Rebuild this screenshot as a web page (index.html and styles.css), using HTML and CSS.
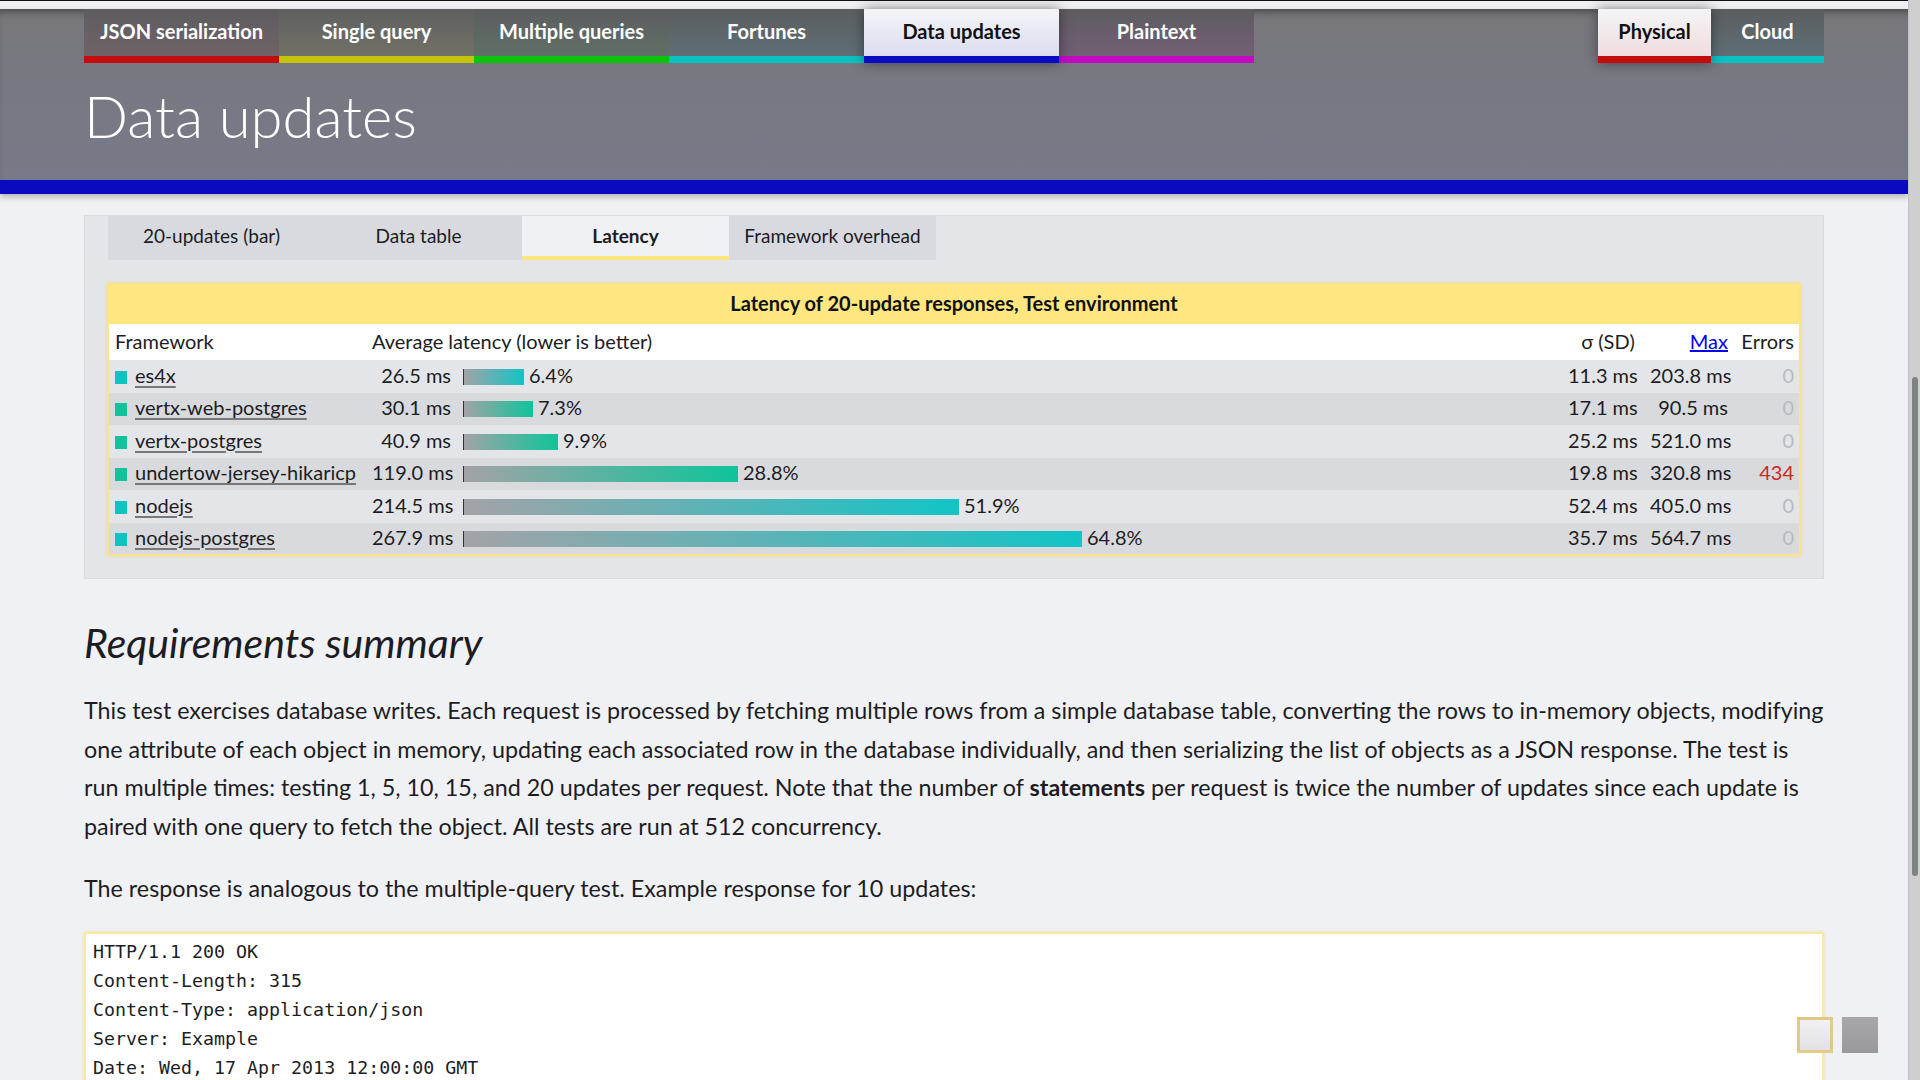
FILE: index.html
```html
<!DOCTYPE html>
<html lang="en">
<head>
<meta charset="utf-8">
<title>Data updates</title>
<link rel="stylesheet" href="styles.css">
</head>
<body>
<div class="window">
  <div class="page">
    <div class="topstrip"></div>
    <header class="hero">
      <div class="hero-inner wrap">
        <nav class="tabs">
          <div class="tab-group">
            <a class="tab t-red">JSON serialization</a>
            <a class="tab t-yellow">Single query</a>
            <a class="tab t-green">Multiple queries</a>
            <a class="tab t-cyan">Fortunes</a>
            <a class="tab t-blue active">Data updates</a>
            <a class="tab t-magenta">Plaintext</a>
          </div>
          <div class="tab-group">
            <a class="tab env t-red active-env">Physical</a>
            <a class="tab env t-cyan">Cloud</a>
          </div>
        </nav>
        <h1 class="title">Data updates</h1>
      </div>
      <div class="bluebar"></div>
    </header>

    <main class="wrap content">
      <section class="panel">
        <div class="subtabs">
          <span class="subtab">20-updates (bar)</span>
          <span class="subtab">Data table</span>
          <span class="subtab current">Latency</span>
          <span class="subtab">Framework overhead</span>
        </div>

        <table class="results">
          <colgroup>
            <col class="c-name"><col class="c-num"><col class="c-bar"><col class="c-sd"><col class="c-max"><col class="c-err">
          </colgroup>
          <thead>
            <tr class="caption-row"><th colspan="6">Latency of 20-update responses, Test environment</th></tr>
            <tr class="head-row">
              <th class="l">Framework</th>
              <th class="l" colspan="2">Average latency (lower is better)</th>
              <th class="r end">σ (SD)</th>
              <th class="r end"><a class="maxlink">Max</a></th>
              <th class="r last">Errors</th>
            </tr>
          </thead>
          <tbody>
            <tr>
              <td><span class="sw cyan"></span><a class="fw">es4x</a></td>
              <td class="r">26.5 ms</td>
              <td><span class="bar cyan" style="width:61px"></span><span class="pct">6.4%</span></td>
              <td class="r end">11.3 ms</td><td class="r end">203.8 ms</td><td class="r last zero">0</td>
            </tr>
            <tr>
              <td><span class="sw green"></span><a class="fw">vertx-web-postgres</a></td>
              <td class="r">30.1 ms</td>
              <td><span class="bar green" style="width:70px"></span><span class="pct">7.3%</span></td>
              <td class="r end">17.1 ms</td><td class="r end">90.5 ms</td><td class="r last zero">0</td>
            </tr>
            <tr>
              <td><span class="sw green"></span><a class="fw">vertx-postgres</a></td>
              <td class="r">40.9 ms</td>
              <td><span class="bar green" style="width:95px"></span><span class="pct">9.9%</span></td>
              <td class="r end">25.2 ms</td><td class="r end">521.0 ms</td><td class="r last zero">0</td>
            </tr>
            <tr>
              <td><span class="sw green"></span><a class="fw">undertow-jersey-hikaricp</a></td>
              <td class="r">119.0 ms</td>
              <td><span class="bar green" style="width:275px"></span><span class="pct">28.8%</span></td>
              <td class="r end">19.8 ms</td><td class="r end">320.8 ms</td><td class="r last err">434</td>
            </tr>
            <tr>
              <td><span class="sw cyan"></span><a class="fw">nodejs</a></td>
              <td class="r">214.5 ms</td>
              <td><span class="bar cyan" style="width:496px"></span><span class="pct">51.9%</span></td>
              <td class="r end">52.4 ms</td><td class="r end">405.0 ms</td><td class="r last zero">0</td>
            </tr>
            <tr>
              <td><span class="sw cyan"></span><a class="fw">nodejs-postgres</a></td>
              <td class="r">267.9 ms</td>
              <td><span class="bar cyan" style="width:619px"></span><span class="pct">64.8%</span></td>
              <td class="r end">35.7 ms</td><td class="r end">564.7 ms</td><td class="r last zero">0</td>
            </tr>
          </tbody>
        </table>
      </section>

      <h2 class="section-title">Requirements summary</h2>
      <p class="text">This test exercises database writes. Each request is processed by fetching multiple rows from a simple database table, converting the rows to in-memory objects, modifying one attribute of each object in memory, updating each associated row in the database individually, and then serializing the list of objects as a JSON response. The test is run multiple times: testing 1, 5, 10, 15, and 20 updates per request. Note that the number of <strong>statements</strong> per request is twice the number of updates since each update is paired with one query to fetch the object. All tests are run at 512 concurrency.</p>
      <p class="text">The response is analogous to the multiple-query test. Example response for 10 updates:</p>
      <pre class="code">HTTP/1.1 200 OK
Content-Length: 315
Content-Type: application/json
Server: Example
Date: Wed, 17 Apr 2013 12:00:00 GMT</pre>
    </main>
  </div>
  <div class="scrollbar"><div class="thumb"></div></div>
</div>
<div class="corner-buttons">
  <span class="cbtn cbtn-light"></span>
  <span class="cbtn cbtn-dark"></span>
</div>
</body>
</html>
```

FILE: styles.css
```css
* { box-sizing: border-box; }
html, body { margin: 0; padding: 0; height: 100%; }
body {
  background: #f0f1f5;
  color: #1d1d1f;
  font-family: Lato, "Noto Sans", "DejaVu Sans", sans-serif;
  overflow: hidden;
}
.window { display: flex; height: 1080px; overflow: hidden; }
.page { flex: 1; min-width: 0; overflow: hidden; }
.scrollbar {
  width: 12px;
  background: #cfcfcf;
  border-left: 1px solid #c5c1bd;
  display: flex;
  flex-direction: column;
  align-items: center;
}
.thumb {
  margin-top: 377px;
  width: 6px;
  height: 499px;
  border-radius: 3px;
  background: #7e8382;
}
.wrap { width: 1740px; margin: 0 auto; }

.topstrip { height: 9px; background: #f0f0f4; border-top: 1px solid #111; }

.hero {
  background: linear-gradient(to bottom, #77777b, #787a8a);
  box-shadow: inset 0 8px 8px -6px rgba(0,0,0,.45), 0 3px 6px rgba(0,0,0,.25);
  position: relative;
}
.hero-inner { height: 171px; display: flex; flex-direction: column; }
.tabs { display: flex; justify-content: space-between; }
.tab-group { display: flex; }
.tab {
  display: flex; align-items: center; justify-content: center;
  width: 195px; height: 54px;
  padding-bottom: 3px;
  color: #fff; font-weight: 700; font-size: 20px;
  border-bottom: 7px solid;
  text-decoration: none;
}
.tab.env { width: 113px; }
.t-red { border-color: #c40c0c; background: linear-gradient(#5e5c60, #6f6367); }
.t-yellow { border-color: #c4c40a; background: linear-gradient(#5f5f60, #727166); }
.t-green { border-color: #0ac40a; background: linear-gradient(#5c5d60, #5f7065); }
.t-cyan { border-color: #0ac2c2; background: linear-gradient(#5c5d60, #5e6f75); }
.t-blue { border-color: #0a0ac4; }
.t-magenta { border-color: #c40ac4; background: linear-gradient(#5e5c60, #735f75); }
.tab.active {
  background: linear-gradient(#f4f4f8, #dcdcf0);
  color: #111;
  box-shadow: 0 0 12px rgba(0,0,0,.45);
  position: relative;
}
.tab.active-env {
  background: linear-gradient(#f4f4f6, #f0dcdf);
  color: #111;
  box-shadow: 0 0 12px rgba(0,0,0,.45);
  position: relative;
}
.title {
  margin: 17px 0 0;
  font-weight: 300;
  font-size: 58px;
  line-height: 72px;
  color: #fff;
}
.bluebar { height: 14px; background: #0a0ac0; }

/* panel */
.content { padding-top: 21px; }
.panel {
  background: #e4e5e9;
  border: 1px solid #dadbdf;
  padding: 0 22px 22px 22px;
}
.subtabs { display: flex; margin-left: 1px; }
.subtab {
  width: 207px; height: 44px;
  display: flex; align-items: center; justify-content: center;
  background: #d9dadf;
  padding-bottom: 6px;
  font-size: 19px; color: #1d1d1f;
}
.subtab.current {
  background: #f0f1f5;
  border-bottom: 4px solid #fde67e;
  font-weight: 700;
  padding-bottom: 2px;
}

.results {
  margin-top: 23px;
  width: 100%;
  border-collapse: collapse;
  table-layout: fixed;
  border: 2px solid #fbe38a;
  box-shadow: 0 0 3px rgba(240, 215, 110, .8);
  font-size: 20px;
}
.c-name { width: 258px; }
.c-num { width: 91px; }
.c-sd { width: 82px; }
.c-max { width: 93px; }
.c-err { width: 63px; }
.results th, .results td {
  padding: 0 6px 3px;
  white-space: nowrap;
  font-weight: 400;
  text-align: left;
}
.results .end { padding-right: 9px; }
.results .last { padding-left: 0; padding-right: 5px; }
.caption-row th {
  background: #fee680;
  height: 40px;
  text-align: center !important;
  font-weight: 700 !important;
  color: #111;
}
.head-row th { background: #fff; height: 36px; }
.results .r { text-align: right; }
.results tbody tr { height: 32.5px; background: #e4e5e9; }
.results tbody tr:nth-child(even) { background: #d9dadd; }
.maxlink { color: #0000ee; text-decoration: underline; }
.sw {
  display: inline-block; width: 12px; height: 13px;
  margin-right: 8px; vertical-align: -1px;
}
.sw.cyan { background: #10c2c4; }
.sw.green { background: #0ec49a; }
.fw { color: #1d1d1f; text-decoration: underline; text-decoration-color: #777; text-underline-offset: 3px; }
.bar {
  display: inline-block; height: 16px; vertical-align: -2px;
  border-left: 1px solid #333;
}
.bar.cyan { background: linear-gradient(to right, #a3a3a7, #12c4c6); }
.bar.green { background: linear-gradient(to right, #a3a3a7, #0ec49a); }
.pct { margin-left: 5px; }
.zero { color: #b9babd; }
.err { color: #cc2a22; }

.section-title {
  margin: 40px 0 0;
  font-size: 41px;
  line-height: 48px;
  font-style: italic;
  font-weight: 400;
}
.text {
  margin: 24px 0 0;
  font-size: 23.3px;
  line-height: 38.5px;
}
.text strong { font-weight: 700; }
.code {
  margin: 24px 0 0;
  background: #fff;
  border: 2px solid #f7e8a3;
  box-shadow: 0 0 3px rgba(240, 215, 110, .7);
  padding: 3px 7px;
  font-family: "DejaVu Sans Mono", "Liberation Mono", monospace;
  font-size: 18.3px;
  line-height: 29px;
  color: #1d1d1f;
}

.corner-buttons {
  position: fixed; left: 1797px; top: 1017px;
  display: flex; gap: 9px;
}
.cbtn { width: 36px; height: 36px; display: block; }
.cbtn-light {
  border: 3px solid rgba(222, 190, 100, .75);
  background: linear-gradient(#f1f1f3, #e2e2e6);
}
.cbtn-dark { background: linear-gradient(#a8a8aa, #99999b); }
```
